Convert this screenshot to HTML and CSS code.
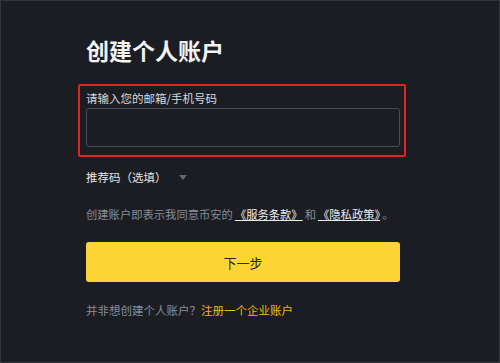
FILE: index.html
```html
<!DOCTYPE html>
<html lang="zh-CN">
<head>
<meta charset="utf-8">
<link rel="stylesheet" href="styles.css">
</head>
<body>
<div class="page">
  <div class="form">
    <h1 class="title">创建个人账户</h1>
    <div class="field-highlight">
      <label class="label">请输入您的邮箱/手机号码</label>
      <div class="input"></div>
    </div>
    <div class="referral">推荐码（选填）<span class="caret"></span></div>
    <p class="terms">创建账户即表示我同意币安的<a class="link">《服务条款》</a>和<a class="link">《隐私政策》</a>。</p>
    <button class="submit">下一步</button>
    <p class="alt">并非想创建个人账户？<a class="alt-link">注册一个企业账户</a></p>
  </div>
</div>
</body>
</html>
```
FILE: styles.css
```css
html, body {
  margin: 0;
  padding: 0;
}
body {
  background: #1c1d22;
  font-family: "Noto Sans CJK SC", "Noto Sans", sans-serif;
  width: 500px;
  height: 363px;
  overflow: hidden;
}
.page {
  box-sizing: border-box;
  width: 500px;
  height: 363px;
  border: 1px solid #34363d;
  padding: 0 99px 0 85px;
}
.form {
  display: flex;
  flex-direction: column;
}
.title {
  margin: 33px 0 0 0;
  font-size: 23px;
  line-height: 32px;
  font-weight: 700;
  color: #f2f3f5;
}
.field-highlight {
  margin: 18px -6px 0 -8px;
  border: 2px solid #e3231f;
  border-radius: 2px;
  padding: 4px 4px 8px 6px;
  display: flex;
  flex-direction: column;
}
.label {
  font-size: 11.5px;
  line-height: 16px;
  color: #d6d9de;
}
.input {
  margin-top: 2px;
  height: 37px;
  border: 1px solid #474d57;
  border-radius: 3px;
}
.referral {
  margin-top: 11px;
  font-size: 11.5px;
  line-height: 18px;
  color: #e3e5e8;
  display: flex;
  align-items: center;
}
.caret {
  margin-left: 12px;
  width: 0;
  height: 0;
  border-left: 4px solid transparent;
  border-right: 4px solid transparent;
  border-top: 5px solid #5e6673;
}
.terms {
  margin: 19px 0 0 0;
  font-size: 11.3px;
  line-height: 18px;
  color: #848e9c;
  white-space: nowrap;
}
.link {
  color: #eaecef;
  text-decoration: underline;
  margin: 0 2px;
}
.submit {
  margin-top: 19px;
  height: 40px;
  border: none;
  border-radius: 3px;
  background: #fcd535;
  color: #24262b;
  font-family: inherit;
  font-size: 13px;
}
.alt {
  margin: 19px 0 0 0;
  font-size: 11.5px;
  line-height: 18px;
  color: #848e9c;
}
.alt-link {
  color: #f0b90b;
}
```
